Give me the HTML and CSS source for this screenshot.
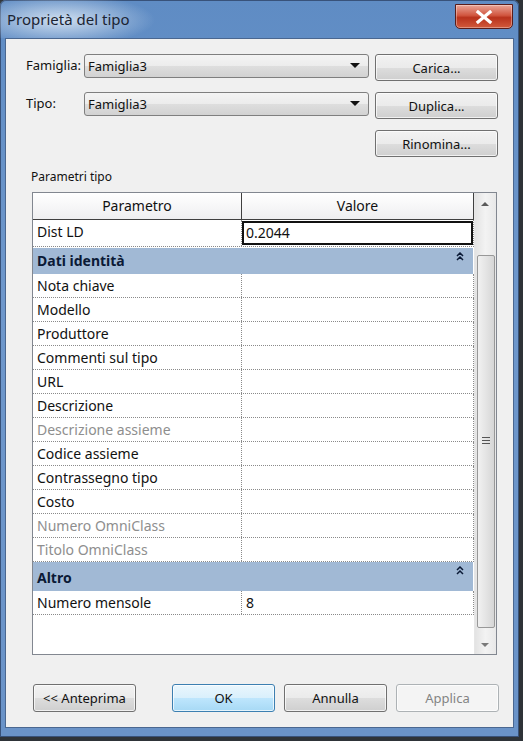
FILE: index.html
```html
<!DOCTYPE html>
<html lang="it">
<head>
    <meta charset="UTF-8">
    <title>Proprietà del tipo</title>
    <link rel="stylesheet" href="styles.css">
</head>
<body>
    <div class="window">
        <div class="titlebar">
            <span class="title">Proprietà del tipo</span>
            <div class="close">
                <svg width="18" height="14" viewBox="0 0 18 14">
                    <path d="M3 2 L15 12 M15 2 L3 12" stroke="#fff" stroke-width="3.2" stroke-linecap="square"/>
                </svg>
            </div>
        </div>

        <div class="client">
            <div class="top-form">
                <label class="lbl">Famiglia:</label>
                <div class="combo">Famiglia3<span class="arrow"></span></div>
                <button class="btn">Carica...</button>

                <label class="lbl">Tipo:</label>
                <div class="combo">Famiglia3<span class="arrow"></span></div>
                <button class="btn">Duplica...</button>

                <span></span>
                <span></span>
                <button class="btn">Rinomina...</button>
            </div>

            <div class="group-title">Parametri tipo</div>

            <div class="list">
                <div class="grid-area">
                    <div class="row head">
                        <div class="cell">Parametro</div>
                        <div class="cell">Valore</div>
                    </div>
                    <div class="row first">
                        <div class="cell">Dist LD</div>
                        <div class="cell edit">0.2044</div>
                    </div>
                    <div class="section">Dati identità
                        <svg class="chev" width="8" height="9" viewBox="0 0 8 9"><path d="M1 4 L4 1 L7 4 M1 8 L4 5 L7 8" fill="none" stroke="#0b1a36" stroke-width="1.5"/></svg>
                    </div>
                    <div class="row"><div class="cell">Nota chiave</div><div class="cell"></div></div>
                    <div class="row"><div class="cell">Modello</div><div class="cell"></div></div>
                    <div class="row"><div class="cell">Produttore</div><div class="cell"></div></div>
                    <div class="row"><div class="cell">Commenti sul tipo</div><div class="cell"></div></div>
                    <div class="row"><div class="cell">URL</div><div class="cell"></div></div>
                    <div class="row"><div class="cell">Descrizione</div><div class="cell"></div></div>
                    <div class="row muted"><div class="cell">Descrizione assieme</div><div class="cell"></div></div>
                    <div class="row"><div class="cell">Codice assieme</div><div class="cell"></div></div>
                    <div class="row"><div class="cell">Contrassegno tipo</div><div class="cell"></div></div>
                    <div class="row"><div class="cell">Costo</div><div class="cell"></div></div>
                    <div class="row muted"><div class="cell">Numero OmniClass</div><div class="cell"></div></div>
                    <div class="row muted"><div class="cell">Titolo OmniClass</div><div class="cell"></div></div>
                    <div class="section tall">Altro
                        <svg class="chev" width="8" height="9" viewBox="0 0 8 9"><path d="M1 4 L4 1 L7 4 M1 8 L4 5 L7 8" fill="none" stroke="#0b1a36" stroke-width="1.5"/></svg>
                    </div>
                    <div class="row"><div class="cell">Numero mensole</div><div class="cell">8</div></div>
                </div>
                <div class="scrollbar">
                    <div class="sb-arrow up"></div>
                    <div class="thumb"><span class="grip"></span></div>
                    <div class="sb-arrow down"></div>
                </div>
            </div>

            <div class="footer">
                <button class="btn wide">&lt;&lt; Anteprima</button>
                <div class="footer-right">
                    <button class="btn wide default">OK</button>
                    <button class="btn wide">Annulla</button>
                    <button class="btn wide" disabled>Applica</button>
                </div>
            </div>
        </div>
    </div>
</body>
</html>
```

FILE: styles.css
```css
body {
    margin: 0;
    background-color: #2e3338;
    font-family: "Noto Sans", "Open Sans", sans-serif;
    width: 523px;
    height: 741px;
    overflow: hidden;
}

.window {
    width: 509px;
    height: 729px;
    padding: 0 5px 8px 5px;
    background: linear-gradient(180deg, #5f8cc4 0%, #6e97cb 40%, #6a93c8 100%);
    border-radius: 6px 6px 0 0;
    box-shadow: inset 0 0 0 1px #38527a;
}

.titlebar {
    height: 38px;
    display: flex;
    justify-content: space-between;
    align-items: flex-start;
    background: radial-gradient(ellipse 95px 26px at 60px 20px, rgba(220,232,245,0.9), rgba(220,232,245,0) 100%);
    margin: 0 -5px;
    padding: 0 6px 0 7px;
}

.title {
    font-size: 15px;
    color: #1b2433;
    margin-top: 9px;
}

.close {
    width: 56px;
    height: 23px;
    margin-top: 4px;
    border: 1px solid #5a1d1a;
    border-radius: 0 0 5px 5px;
    background: linear-gradient(180deg, #e9a597 0%, #d1563f 45%, #b8321c 55%, #d25a3c 100%);
    display: flex;
    align-items: center;
    justify-content: center;
    box-shadow: inset 0 0 0 1px rgba(255,255,255,0.35);
}

.client {
    height: 688px;
    background-color: #f0f0f0;
    border: 1px solid #4a6790;
    display: flex;
    flex-direction: column;
    padding: 0 14px 0 20px;
}

.top-form {
    display: grid;
    grid-template-columns: 52px 285px 123px;
    column-gap: 6px;
    row-gap: 11px;
    align-items: start;
    margin-top: 15px;
}

.lbl {
    font-size: 13px;
    color: #111;
    line-height: 23px;
    white-space: nowrap;
}

.combo {
    height: 22px;
    border: 1px solid #7f7f7f;
    border-radius: 3px;
    background: linear-gradient(180deg, #f4f4f4 0%, #ececec 50%, #dedede 51%, #d2d2d2 100%);
    font-size: 13px;
    line-height: 22px;
    padding-left: 3px;
    color: #111;
    position: relative;
}

.arrow {
    position: absolute;
    right: 8px;
    top: 8px;
    border-left: 5px solid transparent;
    border-right: 5px solid transparent;
    border-top: 5px solid #111;
}

.btn {
    height: 27px;
    border: 1px solid #707070;
    border-radius: 3px;
    background: linear-gradient(180deg, #f2f2f2 0%, #ebebeb 50%, #dddddd 51%, #cfcfcf 100%);
    font-family: "Noto Sans", "Open Sans", sans-serif;
    font-size: 13px;
    color: #111;
    padding: 0;
    box-shadow: inset 0 0 0 1px rgba(255,255,255,0.7);
}

.btn.default {
    border-color: #3c7fb1;
    background: linear-gradient(180deg, #eaf6fd 0%, #d9f0fc 50%, #bee6fd 51%, #a7d9f5 100%);
}

.btn:disabled {
    border-color: #adb2b5;
    background: #f4f4f4;
    color: #838383;
}

.group-title {
    font-size: 12px;
    color: #111;
    margin: 12px 0 0 5px;
    line-height: 16px;
}

.list {
    width: 463px;
    height: 461px;
    margin: 7px 0 0 6px;
    border: 1px solid #828790;
    background: #fff;
    display: flex;
}

.grid-area {
    width: 441px;
    font-size: 14px;
    color: #111;
}

.row {
    display: grid;
    grid-template-columns: 209px 231px;
    height: 23px;
    border-bottom: 1px dotted #8a8a8a;
    border-right: 1px dotted #8a8a8a;
}

.row .cell {
    padding-left: 4px;
    line-height: 23px;
    white-space: nowrap;
}

.row .cell:first-child {
    border-right: 1px dotted #8a8a8a;
}

.row.head {
    height: 26px;
    background: linear-gradient(180deg, #ffffff 0%, #f7f7f8 50%, #eeeef0 100%);
    border-bottom: 1px solid #3f3f3f;
    border-right: 1px solid #3f3f3f;
}

.row.head .cell {
    text-align: center;
    line-height: 26px;
    padding-left: 0;
}

.row.head .cell:first-child {
    border-right: 1px solid #3f3f3f;
}

.row.first {
    height: 26px;
    margin-bottom: 1px;
}

.row.first .cell:first-child {
    line-height: 24px;
}

.row .cell.edit {
    border: 2px solid #111;
    line-height: 20px;
    padding-left: 2px;
    margin-top: 1px;
    height: 20px;
}

.row.muted {
    color: #8e8e8e;
}

.section {
    height: 26px;
    line-height: 25px;
    background-color: #a1b9d5;
    font-weight: bold;
    color: #0b1a36;
    padding-left: 4px;
    position: relative;
    width: 436px;
}

.section.tall {
    height: 29px;
    line-height: 31px;
}

.chev {
    position: absolute;
    right: 9px;
    top: 4px;
}

.scrollbar {
    width: 21px;
    background: linear-gradient(90deg, #e3e3e3 0%, #f3f3f3 50%, #e8e8e8 100%);
    display: flex;
    flex-direction: column;
    align-items: center;
    border-left: 1px solid #e6e6e6;
}

.sb-arrow {
    height: 20px;
    width: 100%;
    position: relative;
}

.sb-arrow.up::after, .sb-arrow.down::after {
    content: "";
    position: absolute;
    left: 6px;
    border-left: 4px solid transparent;
    border-right: 4px solid transparent;
}

.sb-arrow.up::after {
    top: 9px;
    border-bottom: 4px solid #5a5a5a;
}

.sb-arrow.down::after {
    top: 9px;
    border-top: 4px solid #7a7a7a;
}

.sb-arrow.up {
    margin-bottom: 42px;
}

.thumb {
    width: 16px;
    flex: 1;
    margin-bottom: 6px;
    border: 1px solid #989898;
    border-radius: 2px;
    background: linear-gradient(90deg, #f1f1f1 0%, #e4e4e4 50%, #d6d6d6 100%);
    display: flex;
    align-items: center;
    justify-content: center;
}

.grip {
    width: 8px;
    height: 9px;
    background: repeating-linear-gradient(180deg, #555 0px, #555 1px, transparent 1px, transparent 3px);
}

.footer {
    display: flex;
    justify-content: space-between;
    margin-top: 29px;
    padding-left: 7px;
}

.footer-right {
    display: flex;
    gap: 9px;
}

.btn.wide {
    width: 103px;
    height: 28px;
}
```
